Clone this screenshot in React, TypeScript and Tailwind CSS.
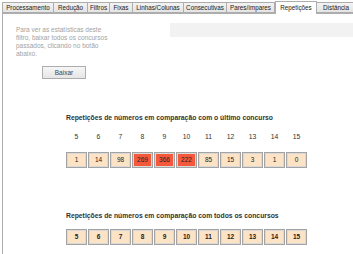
const tabs = [
  { label: "Processamento", w: 52 },
  { label: "Redução", w: 35 },
  { label: "Filtros", w: 23 },
  { label: "Fixas", w: 24 },
  { label: "Linhas/Colunas", w: 52 },
  { label: "Consecutivas", w: 44 },
  { label: "Pares/ímpares", w: 49 },
  { label: "Repetições", w: 42, active: true },
  { label: "Distância", w: 40 },
];

const numbers = [5, 6, 7, 8, 9, 10, 11, 12, 13, 14, 15];
const lastRepeats = [1, 14, 98, 269, 366, 222, 85, 15, 3, 1, 0];
const hot = [269, 366, 222];

function Tab({ label, w, active }: { label: string; w: number; active?: boolean }) {
  if (active) {
    return (
      <div
        style={{ width: w }}
        className="relative z-10 -mb-px flex h-[13px] shrink-0 items-start justify-center border border-b-0 border-[#adadad] bg-white pt-[1px] text-[6.3px] text-[#222]"
      >
        {label}
      </div>
    );
  }
  return (
    <div
      style={{ width: w }}
      className="flex h-[11px] shrink-0 items-center justify-center border border-[#adadad] bg-gradient-to-b from-[#f3f3f3] to-[#e4e4e4] text-[6.3px] text-[#222] -ml-px first:ml-0"
    >
      {label}
    </div>
  );
}

function Cell({ value, red, bold }: { value: number; red?: boolean; bold?: boolean }) {
  return (
    <div
      className={`flex h-[16px] w-[21px] items-center justify-center border border-[#a3a3a3] text-[6.5px] text-[#222] shadow-[inset_0_0_0_1px_#d9d9d9] ${
        red ? "bg-[#f6583c]" : "bg-[#fde3c6]"
      } ${bold ? "font-bold" : ""}`}
    >
      {value}
    </div>
  );
}

export default function App() {
  return (
    <div className="flex h-[254px] w-[353px] flex-col overflow-hidden bg-white font-['Liberation_Sans',Arial,sans-serif]">
      <div className="flex h-[13px] shrink-0 items-end pl-[2px]">
        {tabs.map((t) => (
          <Tab key={t.label} {...t} />
        ))}
      </div>

      <div className="ml-[2px] flex-1 border-l border-t border-[#adadad]">
        <div className="flex items-start pt-[9px]">
          <div className="ml-[13px] mt-[3px] flex w-[100px] flex-col">
            <p className="text-[6.5px] leading-[8px] text-[#a3a3a3]">
              Para ver as estatísticas deste filtro, baixar todos os concursos passados, clicando no botão abaixo.
            </p>
            <button className="ml-[26px] mt-[8px] h-[13px] w-[44px] border border-[#adadad] bg-gradient-to-b from-[#f6f6f6] to-[#e6e6e6] text-[6.5px] text-[#444]">
              Baixar
            </button>
          </div>
          <div className="ml-auto h-[14px] w-[183px] bg-[#f2f2f2]" />
        </div>

        <div className="ml-[63px] mt-[34px]">
          <h2 className="text-[6.8px] font-bold leading-[9px] text-[#333]">
            Repetições de números em comparação com o último concurso
          </h2>
          <div className="mt-[10px] flex gap-px">
            {numbers.map((n) => (
              <div key={n} className="w-[21px] text-center text-[6.8px] leading-[9px] text-[#333]">
                {n}
              </div>
            ))}
          </div>
          <div className="mt-[11px] flex gap-px">
            {lastRepeats.map((v, i) => (
              <Cell key={i} value={v} red={hot.includes(v)} />
            ))}
          </div>

          <h2 className="mt-[43px] text-[6.8px] font-bold leading-[9px] text-[#333]">
            Repetições de números em comparação com todos os concursos
          </h2>
          <div className="mt-[9px] flex gap-px">
            {numbers.map((n) => (
              <Cell key={n} value={n} bold />
            ))}
          </div>
        </div>
      </div>
    </div>
  );
}
